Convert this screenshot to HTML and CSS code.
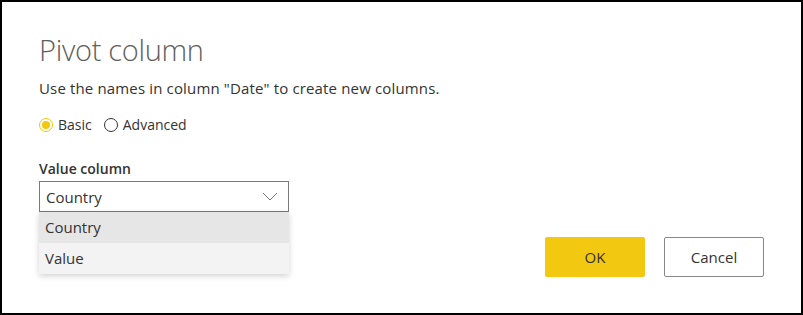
FILE: index.html
```html
<!DOCTYPE html>
<html>
<head>
    <title>Pivot column</title>
    <link rel="stylesheet" href="styles.css">
</head>
<body>
    <div class="dialog">
        <h1>Pivot column</h1>
        <p class="desc">Use the names in column "Date" to create new columns.</p>

        <div class="radios">
            <label class="radio checked"><span class="dot"></span>Basic</label>
            <label class="radio"><span class="dot"></span>Advanced</label>
        </div>

        <div class="field">
            <div class="field-label">Value column</div>
            <div class="select">
                <span>Country</span>
                <svg class="chevron" width="16" height="9" viewBox="0 0 16 9">
                    <path d="M1 1 L8 8 L15 1" fill="none" stroke="#777" stroke-width="1"/>
                </svg>
            </div>
            <ul class="menu">
                <li class="hover">Country</li>
                <li>Value</li>
            </ul>
        </div>

        <div class="footer">
            <button class="btn primary">OK</button>
            <button class="btn">Cancel</button>
        </div>
    </div>
</body>
</html>
```

FILE: styles.css
```css
body { margin: 0; font-family: "Open Sans", "Noto Sans", sans-serif; color: #252423; }
.dialog { width: 803px; height: 315px; box-sizing: border-box; border: 2px solid #000; padding: 0 37px 0 37px; background: #fff; }
h1 { margin: 30px 0 0; font-size: 29px; font-weight: 300; line-height: 36px; color: #605e5c; letter-spacing: -0.3px; }
.desc { margin: 10px 0 0; font-size: 15px; line-height: 20px; color: #333; letter-spacing: 0.15px; }
.radios { display: flex; gap: 12px; margin-top: 17px; height: 20px; }
.radio { display: flex; align-items: center; gap: 5px; font-size: 14px; line-height: 20px; color: #333; }
.dot { width: 12px; height: 12px; border: 1px solid #333; border-radius: 50%; position: relative; box-sizing: content-box; }
.radio.checked .dot { border-color: #f2c811; }
.radio.checked .dot::after { content: ""; position: absolute; left: 2px; top: 2px; width: 8px; height: 8px; border-radius: 50%; background: #f2c811; }
.field { margin-top: 24px; position: relative; width: 250px; }
.field-label { font-size: 14px; line-height: 20px; font-weight: 600; color: #333; }
.select { margin-top: 2px; height: 31px; box-sizing: border-box; border: 1px solid #7a7a7a; display: flex; align-items: center; justify-content: space-between; padding: 0 10px 0 6px; font-size: 15px; color: #333; }
.chevron { display: block; }
.menu { position: absolute; left: 0; top: 53px; width: 250px; margin: 0; padding: 0; list-style: none; background: #f3f3f3; box-shadow: 0 2px 6px rgba(0,0,0,0.18); }
.menu li { height: 31px; line-height: 31px; padding-left: 6px; font-size: 15px; color: #333; }
.menu li.hover { background: #e6e6e6; }
.footer { display: flex; justify-content: flex-end; gap: 19px; margin-top: 25px; }
.btn { width: 100px; height: 40px; box-sizing: border-box; border: 1px solid #8a8886; border-radius: 2px; background: #fff; font-family: inherit; font-size: 15px; color: #333; }
.btn.primary { background: #f2c811; border-color: #f2c811; }
```
